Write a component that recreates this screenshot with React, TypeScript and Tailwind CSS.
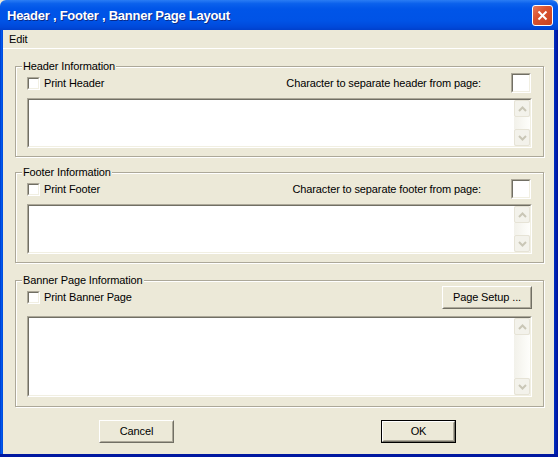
import React from "react";

function Sunken({ className, children }: { className: string; children?: React.ReactNode }) {
  return (
    <div className={`border border-t-[#ACA899] border-l-[#ACA899] border-b-white border-r-white ${className}`}>
      <div className="h-full w-full border border-t-[#716F64] border-l-[#716F64] border-b-[#F1EFE2] border-r-[#F1EFE2] bg-white">
        {children}
      </div>
    </div>
  );
}

function ScrollBtn({ up }: { up: boolean }) {
  return (
    <div className="h-[17px] w-[16px] rounded-[2px] border border-[#E6E3D6] bg-[#F3F2EB] flex items-center justify-center">
      <svg width="9" height="6" viewBox="0 0 9 6">
        {up ? (
          <polyline points="1,5 4.5,1.5 8,5" fill="none" stroke="#C9C6B6" strokeWidth="2" />
        ) : (
          <polyline points="1,1 4.5,4.5 8,1" fill="none" stroke="#C9C6B6" strokeWidth="2" />
        )}
      </svg>
    </div>
  );
}

function TextBox({ h }: { h: string }) {
  return (
    <Sunken className={`w-[505px] ${h}`}>
      <div className="flex h-full w-full">
        <div className="flex-1" />
        <div className="w-[16px] flex flex-col bg-[#F7F6F1]">
          <ScrollBtn up />
          <div className="flex-1 bg-[linear-gradient(to_right,#F2F1EA,#FEFEFB)]" />
          <ScrollBtn up={false} />
        </div>
      </div>
    </Sunken>
  );
}

function Check({ label }: { label: string }) {
  return (
    <div className="flex items-center">
      <Sunken className="w-[13px] h-[13px]" />
      <span className="ml-[4px]">{label}</span>
    </div>
  );
}

function Btn({ children, def, className }: { children: React.ReactNode; def?: boolean; className: string }) {
  if (def) {
    return (
      <div className={`border border-black ${className}`}>
        <div className="h-full w-full border border-t-white border-l-white border-b-[#716F64] border-r-[#716F64]">
          <div className="h-full w-full border border-t-[#ECE9D8] border-l-[#ECE9D8] border-b-[#ACA899] border-r-[#ACA899] flex items-center justify-center">
            {children}
          </div>
        </div>
      </div>
    );
  }
  return (
    <div className={`border border-t-white border-l-white border-b-[#716F64] border-r-[#716F64] ${className}`}>
      <div className="h-full w-full border border-t-[#ECE9D8] border-l-[#ECE9D8] border-b-[#ACA899] border-r-[#ACA899] flex items-center justify-center">
        {children}
      </div>
    </div>
  );
}

function Group({ title, className, children }: { title: string; className: string; children: React.ReactNode }) {
  return (
    <div className={`relative ml-[12px] w-[529px] border border-[#ACA899] shadow-[1px_1px_0_#FFFFFF,inset_1px_1px_0_#FFFFFF] ${className}`}>
      <span className="absolute -top-[7px] left-[6px] px-[1px] leading-[13px] bg-[#ECE9D8]">{title}</span>
      {children}
    </div>
  );
}

export default function App() {
  return (
    <div className="w-[558px] h-[457px] flex flex-col font-['Liberation_Sans',Arial,sans-serif] text-[11px] tracking-[-0.12px] text-black bg-[#ECE9D8]">
      {/* Title bar */}
      <div className="h-[30px] shrink-0 rounded-t-[6px] bg-[linear-gradient(to_bottom,#2A7CF4_0%,#0B61EC_12%,#0055E8_30%,#0053E6_70%,#0049DA_90%,#0040CC_100%)] flex items-center pl-[7px] pr-[5px]">
        <span className="text-white font-bold text-[13px] tracking-[-0.25px] [text-shadow:1px_1px_0_#0A2A8A] pt-[1px]">
          Header , Footer , Banner Page Layout
        </span>
        <div className="ml-auto w-[21px] h-[21px] rounded-[3px] border border-white bg-[linear-gradient(135deg,#E8795A_0%,#D9522F_40%,#C9421F_100%)] flex items-center justify-center">
          <svg width="11" height="11" viewBox="0 0 11 11">
            <line x1="1.5" y1="1.5" x2="9.5" y2="9.5" stroke="white" strokeWidth="2" />
            <line x1="9.5" y1="1.5" x2="1.5" y2="9.5" stroke="white" strokeWidth="2" />
          </svg>
        </div>
      </div>
      {/* Frame */}
      <div className="flex flex-1">
        <div className="w-[3px] bg-[linear-gradient(to_right,#0038C8,#0058EC,#0048DA)]" />
        <div className="flex-1 flex flex-col">
          <div className="h-[18px] border-b border-white flex items-center pl-[6px] box-content">
            <span>Edit</span>
          </div>
          {/* Header */}
          <Group title="Header Information" className="mt-[17px] pt-[6px] pb-[8px] px-[11px]">
            <div className="h-[20px] flex items-center">
              <Check label="Print Header" />
              <span className="ml-auto mr-[30px]">Character to separate header from page:</span>
              <Sunken className="w-[20px] h-[20px] mr-[1px]" />
            </div>
            <div className="mt-[5px]">
              <TextBox h="h-[50px]" />
            </div>
          </Group>
          {/* Footer */}
          <Group title="Footer Information" className="mt-[15px] pt-[6px] pb-[8px] px-[11px]">
            <div className="h-[20px] flex items-center">
              <Check label="Print Footer" />
              <span className="ml-auto mr-[30px]">Character to separate footer from page:</span>
              <Sunken className="w-[20px] h-[20px] mr-[1px]" />
            </div>
            <div className="mt-[5px]">
              <TextBox h="h-[50px]" />
            </div>
          </Group>
          {/* Banner */}
          <Group title="Banner Page Information" className="mt-[17px] pt-[5px] pb-[9px] px-[11px]">
            <div className="h-[23px] flex items-center">
              <Check label="Print Banner Page" />
              <Btn className="ml-auto w-[90px] h-[23px]">Page Setup ...</Btn>
            </div>
            <div className="mt-[7px]">
              <TextBox h="h-[81px]" />
            </div>
          </Group>
          {/* Buttons */}
          <div className="mt-[13px] flex pl-[96px]">
            <Btn className="w-[75px] h-[23px]">Cancel</Btn>
            <Btn def className="ml-[207px] w-[75px] h-[23px]">OK</Btn>
          </div>
        </div>
        <div className="w-[4px] bg-[linear-gradient(to_right,#0030C0,#0020B0,#00139A)]" />
      </div>
      <div className="h-[3px] shrink-0 bg-[#0018A0]" />
    </div>
  );
}
